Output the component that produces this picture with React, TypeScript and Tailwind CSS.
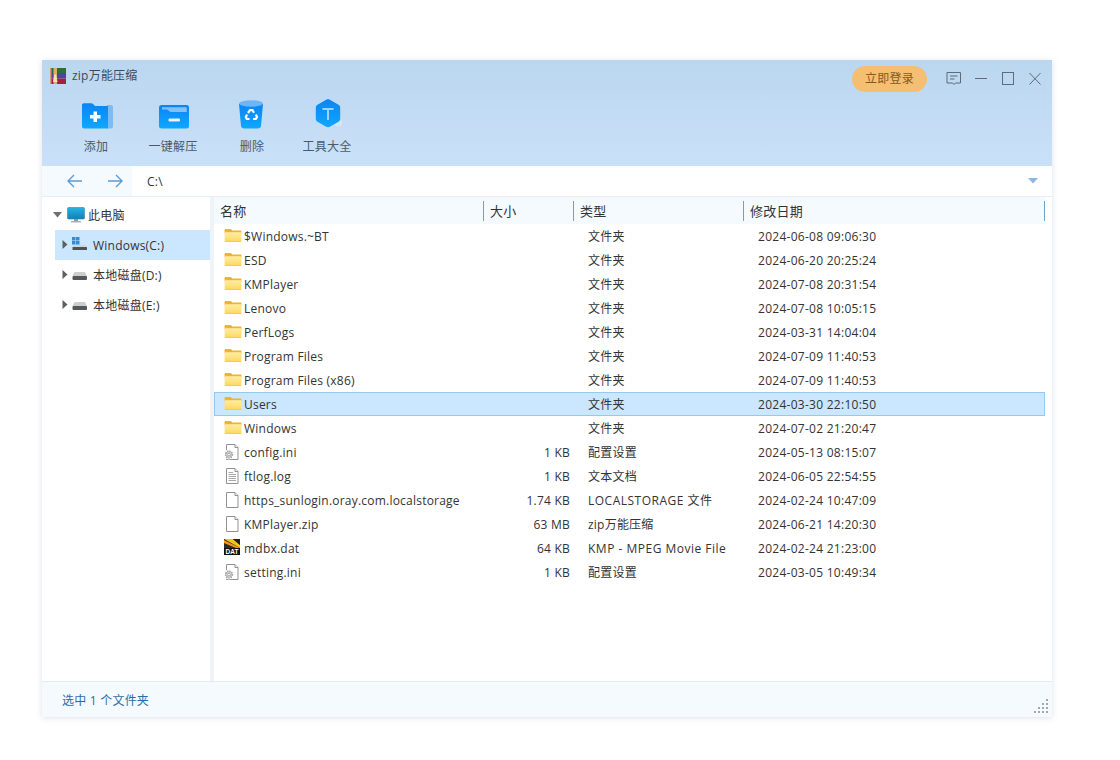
import React from "react";

const font = { fontFamily: '"Open Sans","Noto Sans CJK SC",sans-serif', letterSpacing: "0.22px" };

function Folder() {
  return (
    <svg width="18" height="15" viewBox="0 0 18 15" className="shrink-0">
      <defs>
        <linearGradient id="fg" x1="0" y1="0" x2="0" y2="1">
          <stop offset="0" stopColor="#ffeda6" />
          <stop offset="1" stopColor="#ffd65a" />
        </linearGradient>
      </defs>
      <path d="M.6 2C.6 1.400 1 1 1.600 1h4.700c.4 0 .7.2 1 .5L8.400 2.600H16.400c.6 0 1 .4 1 1V6H.6z" fill="#f0b32b" />
      <path d="M.6 4.300h16.800v8.700c0 .6-.4 1-1 1H1.600c-.6 0-1-.4-1-1z" fill="url(#fg)" />
      <path d="M.6 13.400h16.800c0 .4-.4.6-.9.6H1.500c-.5 0-.9-.2-.9-.6z" fill="#f0bd4a" />
    </svg>
  );
}

function Page({ lines, gear }: { lines?: boolean; gear?: boolean }) {
  return (
    <svg width="16" height="17" viewBox="0 0 16 17" className="shrink-0">
      <path d="M2.500 1.500h8.500l3 3v12h-11.500z" fill="#fff" stroke="#929292" />
      <path d="M11 1.500v3h3" fill="#f2f2f2" stroke="#929292" />
      {lines && (
        <g stroke="#a8a8a8">
          <path d="M4.500 5.500h4.500M4.500 7.500h7.500M4.500 9.500h7.500M4.500 11.500h7.500M4.500 13.500h7.500" />
        </g>
      )}
      {gear && (
        <g>
          <circle cx="5" cy="11.500" r="5" fill="#fff" />
          <circle cx="5" cy="11.500" r="3.300" fill="#d4d4d4" stroke="#a2a2a2" strokeDasharray="1.300 0.900" strokeWidth="1.800" />
          <circle cx="5" cy="11.500" r="1.300" fill="#fff" stroke="#959595" strokeWidth=".7" />
        </g>
      )}
    </svg>
  );
}

function DatIcon() {
  return (
    <svg width="16" height="16" viewBox="0 0 16 16" className="shrink-0">
      <rect width="16" height="16" fill="#111" />
      <path d="M0 0h9l7 6v3z" fill="#f7c21b" />
      <path d="M0 1l16 8H0z" fill="#f39a12" />
      <path d="M0 4l12 5H0z" fill="#2a2a2a" />
      <path d="M9 0h7v6z" fill="#1f1f1f" />
      <text x="8" y="15.200" textAnchor="middle" fontSize="6.500" fontWeight="700" fill="#fff" fontFamily='"Liberation Sans",sans-serif' letterSpacing="0">DAT</text>
    </svg>
  );
}

function Drive({ win }: { win?: boolean }) {
  return (
    <svg width="18" height="16" viewBox="0 0 18 16" className="shrink-0">
      {win ? (
        <g>
          <g fill="#2a8fdc">
            <rect x="1" y="0" width="3.500" height="3.500" />
            <rect x="5" y="0" width="3.500" height="3.500" />
            <rect x="1" y="4" width="3.500" height="3.500" />
            <rect x="5" y="4" width="3.500" height="3.500" />
          </g>
          <path d="M3 8h11.500l1.500 2H1.500z" fill="#cfd6dc" />
          <rect x="1.500" y="10" width="14.500" height="3" rx=".5" fill="#4e5357" />
        </g>
      ) : (
        <g>
          <path d="M3.500 5h10.500l2 4H1.500z" fill="#cdcdcd" />
          <rect x="1.500" y="9" width="14.500" height="4" rx="1" fill="#53585c" />
        </g>
      )}
    </svg>
  );
}

function Tri({ open }: { open?: boolean }) {
  return open ? (
    <svg width="10" height="6" viewBox="0 0 10 6" className="shrink-0"><path d="M0 0h9L4.500 5.500z" fill="#6f6f6f" /></svg>
  ) : (
    <svg width="6" height="10" viewBox="0 0 6 10" className="shrink-0"><path d="M.5 0L5.500 4.500.5 9z" fill="#5f5f5f" /></svg>
  );
}

const blue = (
  <defs>
    <linearGradient id="bl" x1="0" y1="0" x2="0" y2="1">
      <stop offset="0" stopColor="#0a84f4" />
      <stop offset="1" stopColor="#10a7ff" />
    </linearGradient>
  </defs>
);

function AddIcon() {
  return (
    <svg width="31" height="26" viewBox="0 0 31 26" className="ml-[3px]">
      {blue}
      <path d="M25 2h4c1 0 2 1 2 2v19.500c0 1-1 2-2 2h-4z" fill="#7cbcf5" />
      <path d="M0 2C0 1 .8.300 1.800.3h7.700c.6 0 1.100.3 1.500.7L13 3h13v22.500H2c-1.100 0-2-.9-2-2z" fill="url(#bl)" />
      <path d="M11.500 8.500h3.500v3.500h3.500v3.500H15v3.500h-3.500v-3.500H8V12h3.500z" fill="#fff" />
    </svg>
  );
}
function ExtractIcon() {
  return (
    <svg width="30" height="24" viewBox="0 0 30 24" className="ml-[1px]">
      {blue}
      <rect x="0" y="0" width="30" height="23.500" rx="2.500" fill="url(#bl)" />
      <path d="M3 2.200h23.500c.8 0 1.300.5 1.300 1.200V7H11.500L8 4.500H3z" fill="#82c1f8" />
      <rect x="9.500" y="13.500" width="11.500" height="3" rx="1.200" fill="#e8f4ff" />
    </svg>
  );
}
function TrashIcon() {
  return (
    <svg width="26" height="29" viewBox="0 0 26 29" className="mr-[2px]">
      {blue}
      <path d="M1 4h24L23 26c-.2 1.500-1.500 2.500-3 2.500H6c-1.500 0-2.800-1-3-2.500z" fill="url(#bl)" />
      <ellipse cx="13" cy="3.500" rx="12" ry="3.300" fill="#6cb6f6" />
      <g fill="none" stroke="#fff" strokeWidth="2.200">
        <path d="M10 13l2-2.800h2.500l1.500 2.500" />
        <path d="M17.800 14.500l1.200 2.500-1.200 2h-2.800" />
        <path d="M11.500 19H8.800l-1-2 1.300-2.500" />
      </g>
    </svg>
  );
}
function ToolIcon() {
  return (
    <svg width="30" height="30" viewBox="0 0 30 30" className="ml-[1px]">
      {blue}
      <circle cx="25.500" cy="24" r="3.500" fill="#d2e7fb" />
      <path d="M13.200.8c1.100-.6 2.500-.6 3.600 0l8.700 5c1.100.6 1.700 1.700 1.700 3v11c0 1.300-.6 2.400-1.700 3l-8.700 5c-1.100.6-2.500.6-3.600 0l-8.700-5C3.400 22.200 2.800 21.100 2.800 19.800v-11c0-1.300.6-2.400 1.700-3z" fill="url(#bl)" />
      <path d="M9.500 9h11v2h-4.500v10h-2V11H9.500z" fill="#9fd2fb" />
    </svg>
  );
}

function Logo() {
  return (
    <svg width="16" height="16" viewBox="0 0 16 16" className="shrink-0">
      <rect x="0" y="0" width="16" height="5.500" fill="#2f6e3c" />
      <rect x="0" y="5" width="16" height="5.500" fill="#47479c" />
      <rect x="0" y="10.500" width="16" height="5.500" fill="#a81f3d" />
      <rect x="0" y="0" width="1.500" height="16" fill="#d0986f" />
      <rect x="3.500" y="0" width="3.500" height="16" fill="#dcb063" />
      <path d="M4.500 6.500h1.500l1.500 7.500h-4.500z" fill="#f3e4b6" />
    </svg>
  );
}

const rows: { name: string; size: string; type: string; date: string; icon: string; sel?: boolean; wide?: boolean }[] = [
  { name: "$Windows.~BT", size: "", type: "文件夹", date: "2024-06-08 09:06:30", icon: "f" },
  { name: "ESD", size: "", type: "文件夹", date: "2024-06-20 20:25:24", icon: "f" },
  { name: "KMPlayer", size: "", type: "文件夹", date: "2024-07-08 20:31:54", icon: "f" },
  { name: "Lenovo", size: "", type: "文件夹", date: "2024-07-08 10:05:15", icon: "f" },
  { name: "PerfLogs", size: "", type: "文件夹", date: "2024-03-31 14:04:04", icon: "f" },
  { name: "Program Files", size: "", type: "文件夹", date: "2024-07-09 11:40:53", icon: "f" },
  { name: "Program Files (x86)", size: "", type: "文件夹", date: "2024-07-09 11:40:53", icon: "f" },
  { name: "Users", size: "", type: "文件夹", date: "2024-03-30 22:10:50", icon: "f", sel: true },
  { name: "Windows", size: "", type: "文件夹", date: "2024-07-02 21:20:47", icon: "f" },
  { name: "config.ini", size: "1 KB", type: "配置设置", date: "2024-05-13 08:15:07", icon: "g" },
  { name: "ftlog.log", size: "1 KB", type: "文本文档", date: "2024-06-05 22:54:55", icon: "l" },
  { name: "https_sunlogin.oray.com.localstorage", size: "1.74 KB", type: "LOCALSTORAGE 文件", date: "2024-02-24 10:47:09", icon: "p", wide: true },
  { name: "KMPlayer.zip", size: "63 MB", type: "zip万能压缩", date: "2024-06-21 14:20:30", icon: "p" },
  { name: "mdbx.dat", size: "64 KB", type: "KMP - MPEG Movie File", date: "2024-02-24 21:23:00", icon: "d", wide: true },
  { name: "setting.ini", size: "1 KB", type: "配置设置", date: "2024-03-05 10:49:34", icon: "g" },
];

function RowIcon({ k }: { k: string }) {
  if (k === "f") return <Folder />;
  if (k === "g") return <Page gear />;
  if (k === "l") return <Page lines />;
  if (k === "d") return <DatIcon />;
  return <Page />;
}

function Head({ label, w }: { label: string; w: string }) {
  return (
    <div className={`${w} shrink-0 flex items-center h-[20px] pl-[6px] pt-[2px] border-r border-[#6ba5c4] text-[13px] text-[#333]`}>
      {label}
    </div>
  );
}

function Tool({ label, ml, children }: { label: string; ml: string; children: React.ReactNode }) {
  return (
    <div className={`${ml} flex flex-col items-center w-[48px]`}>
      <div className="h-[32px] flex items-end justify-center">{children}</div>
      <div className="mt-[10px] text-[12px] leading-[16px] text-[#4b5a68] whitespace-nowrap">{label}</div>
    </div>
  );
}

export default function App() {
  return (
    <div className="w-[1120px] h-[760px] bg-white pt-[60px] pl-[42px]" style={font}>
      <div className="w-[1010px] h-[657px] flex flex-col bg-white shadow-[0_1px_6px_rgba(120,140,170,0.25)]">
        {/* header */}
        <div className="h-[106px] shrink-0 bg-gradient-to-b from-[#bbd6f0] to-[#c9e1f8]">
          <div className="h-[32px] flex items-center pl-[8px] pr-[10px] pt-[6px]">
            <div className="flex items-center -mt-[6px]">
              <Logo />
              <span className="ml-[6px] text-[12px] text-[#3e4a55]">zip万能压缩</span>
            </div>
            <div className="ml-auto w-[75px] h-[26px] rounded-full bg-[#f4bf72] flex items-center justify-center text-[12px] text-[#835a1c]">立即登录</div>
            <svg width="16" height="14" viewBox="0 0 16 14" className="ml-[19px]" fill="none" stroke="#5f6b76">
              <path d="M1 .5h13.500v10.500H9.500L8 12.500 6.500 11H1z" />
              <path d="M4 4h7.500M4 7h4.500" />
            </svg>
            <svg width="14" height="14" viewBox="0 0 14 14" className="ml-[12px]" fill="none" stroke="#5f6b76"><path d="M1 6.500h12" /></svg>
            <svg width="14" height="14" viewBox="0 0 14 14" className="ml-[13px]" fill="none" stroke="#5f6b76"><rect x="1.500" y=".5" width="11" height="12" /></svg>
            <svg width="14" height="14" viewBox="0 0 14 14" className="ml-[13px]" fill="none" stroke="#5f6b76"><path d="M1.500 1l11 11.500M12.500 1l-11 11.500" /></svg>
          </div>
          <div className="flex pt-[5px]">
            <Tool label="添加" ml="ml-[30px]"><AddIcon /></Tool>
            <Tool label="一键解压" ml="ml-[29px]"><ExtractIcon /></Tool>
            <Tool label="删除" ml="ml-[31px]"><TrashIcon /></Tool>
            <Tool label="工具大全" ml="ml-[27px]"><ToolIcon /></Tool>
          </div>
        </div>
        {/* address bar */}
        <div className="h-[31px] shrink-0 flex items-center border-b border-[#e8edf2]">
          <div className="w-[90px] h-full bg-[#f5faff] flex items-center pl-[25px] gap-[26px]">
            <svg width="15" height="14" viewBox="0 0 15 14" fill="none" stroke="#5a9bdc" strokeWidth="1.400"><path d="M15 7H1M7 1L1 7l6 6" /></svg>
            <svg width="15" height="14" viewBox="0 0 15 14" fill="none" stroke="#5a9bdc" strokeWidth="1.400"><path d="M0 7h14M8 1l6 6-6 6" /></svg>
          </div>
          <span className="ml-[15px] pt-[2px] text-[12px] text-[#333]">C:\</span>
          <svg width="10" height="6" viewBox="0 0 10 6" className="ml-auto mr-[14px]"><path d="M0 0h10L5 5.500z" fill="#8db5e4" /></svg>
        </div>
        {/* body */}
        <div className="flex-1 flex min-h-0">
          <div className="w-[168px] shrink-0 pl-[13px] pt-[3px] text-[12px] text-[#333]">
            <div className="h-[30px] flex items-center -ml-[2px]">
              <Tri open />
              <svg width="18" height="16" viewBox="0 0 18 16" className="ml-[4px]">
                <defs><linearGradient id="mon" x1="0" y1="0" x2="0" y2="1"><stop offset="0" stopColor="#27b3e2" /><stop offset="1" stopColor="#0f7fb8" /></linearGradient></defs>
                <rect x=".5" y=".5" width="17" height="11.500" rx="1" fill="url(#mon)" stroke="#3f7f9f" strokeWidth=".6" />
                <rect x="7" y="12" width="4" height="2" fill="#7d9aa8" />
                <rect x="4" y="14" width="10" height="1.500" fill="#a0b4be" />
              </svg>
              <span className="ml-[3px] pt-[2px]">此电脑</span>
            </div>
            {[
              { n: "Windows(C:)", w: true, s: true },
              { n: "本地磁盘(D:)" },
              { n: "本地磁盘(E:)" },
            ].map((d) => (
              <div key={d.n} className={`h-[30px] flex items-center pl-[7px] ${d.s ? "bg-[#cbe6ff]" : ""}`}>
                <Tri />
                <span className="ml-[3px] flex"><Drive win={d.w} /></span>
                <span className="ml-[4px] pt-[2px]">{d.n}</span>
              </div>
            ))}
          </div>
          <div className="w-[4px] shrink-0 bg-[#eef3f8]" />
          <div className="flex-1 flex flex-col min-w-0">
            <div className="h-[27px] shrink-0 flex items-center bg-[#f5faff] mr-[7px]">
              <Head label="名称" w="w-[270px]" />
              <Head label="大小" w="w-[90px]" />
              <Head label="类型" w="w-[170px]" />
              <Head label="修改日期" w="w-[301px]" />
            </div>
            <div className="mr-[7px]">
              {rows.map((r) => (
                <div key={r.name} className={`h-[24px] flex items-center text-[12px] text-[#333] ${r.sel ? "bg-[#cbe6ff] shadow-[inset_0_0_0_1px_#97c9ee]" : ""}`}>
                  <div className="w-[270px] shrink-0 flex items-center pl-[10px]">
                    <span className="w-[20px] flex justify-start -mt-[2px]"><RowIcon k={r.icon} /></span>
                    <span className="whitespace-nowrap pt-[2px]">{r.name}</span>
                  </div>
                  <div className="w-[86px] shrink-0 text-right pt-[2px]">{r.size}</div>
                  <div className={`w-[188px] shrink-0 pl-[18px] whitespace-nowrap pt-[2px] ${r.wide ? "tracking-[0.5px]" : ""}`}>{r.type}</div>
                  <div className="whitespace-nowrap pt-[2px] tracking-[0.27px]">{r.date}</div>
                </div>
              ))}
            </div>
          </div>
        </div>
        {/* status */}
        <div className="h-[36px] shrink-0 border-t border-[#e3eaf0] bg-[#f5faff] flex items-center pl-[20px] pr-[4px] text-[12px] text-[#2f6aa5]">
          <span className="pt-[2px]">选中 1 个文件夹</span>
          <svg width="14" height="14" viewBox="0 0 14 14" fill="#a0a7ad" className="ml-auto mt-[13px]">
            <rect x="12" y="0" width="2" height="2" />
            <rect x="8" y="4" width="2" height="2" />
            <rect x="12" y="4" width="2" height="2" />
            <rect x="4" y="8" width="2" height="2" />
            <rect x="8" y="8" width="2" height="2" />
            <rect x="12" y="8" width="2" height="2" />
            <rect x="0" y="12" width="2" height="2" />
            <rect x="4" y="12" width="2" height="2" />
            <rect x="8" y="12" width="2" height="2" />
            <rect x="12" y="12" width="2" height="2" />
          </svg>
        </div>
      </div>
    </div>
  );
}
